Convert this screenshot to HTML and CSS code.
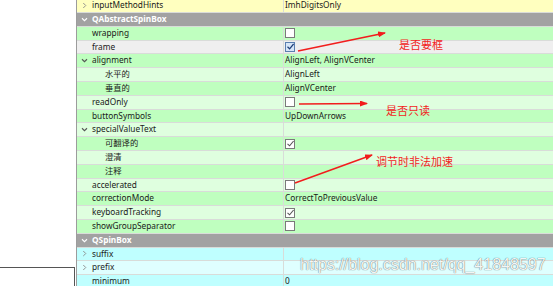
FILE: index.html
```html
<!DOCTYPE html>
<html>
<head>
<meta charset="utf-8">
<link rel="stylesheet" href="styles.css">
</head>
<body>
<div class="page">
  <div class="left">
    <div class="field"></div>
  </div>
  <div class="tree">
    <div class="row yellow"><div class="name"><span class="tw"><svg class="chev" viewBox="0 0 6 8"><path d="M1.5 1 L4.5 4 L1.5 7"/></svg></span>inputMethodHints</div><div class="val">ImhDigitsOnly</div></div>
    <div class="row head"><div class="name"><span class="tw"><svg class="chev down white" viewBox="0 0 8 6"><path d="M1 1.5 L4 4.5 L7 1.5"/></svg></span>QAbstractSpinBox</div></div>
    <div class="row g1"><div class="name">wrapping</div><div class="val"><span class="cb"></span></div></div>
    <div class="row hover"><div class="name">frame</div><div class="val"><span class="cb on blue"><svg viewBox="0 0 9 9"><path d="M1.5 4.8 L3.6 6.8 L7.6 2"/></svg></span></div></div>
    <div class="row g1"><div class="name"><span class="tw"><svg class="chev down" viewBox="0 0 8 6"><path d="M1 1.5 L4 4.5 L7 1.5"/></svg></span>alignment</div><div class="val">AlignLeft, AlignVCenter</div></div>
    <div class="row g2"><div class="name sub">水平的</div><div class="val">AlignLeft</div></div>
    <div class="row g1"><div class="name sub">垂直的</div><div class="val">AlignVCenter</div></div>
    <div class="row g2"><div class="name">readOnly</div><div class="val"><span class="cb"></span></div></div>
    <div class="row g1"><div class="name">buttonSymbols</div><div class="val">UpDownArrows</div></div>
    <div class="row g2"><div class="name"><span class="tw"><svg class="chev down" viewBox="0 0 8 6"><path d="M1 1.5 L4 4.5 L7 1.5"/></svg></span>specialValueText</div><div class="val"></div></div>
    <div class="row g1"><div class="name sub">可翻译的</div><div class="val"><span class="cb on"><svg viewBox="0 0 9 9"><path d="M1.5 4.8 L3.6 6.8 L7.6 2"/></svg></span></div></div>
    <div class="row g2"><div class="name sub">澄清</div><div class="val"></div></div>
    <div class="row g1"><div class="name sub">注释</div><div class="val"></div></div>
    <div class="row g2"><div class="name">accelerated</div><div class="val"><span class="cb"></span></div></div>
    <div class="row g1"><div class="name">correctionMode</div><div class="val">CorrectToPreviousValue</div></div>
    <div class="row g2"><div class="name">keyboardTracking</div><div class="val"><span class="cb on"><svg viewBox="0 0 9 9"><path d="M1.5 4.8 L3.6 6.8 L7.6 2"/></svg></span></div></div>
    <div class="row g1"><div class="name">showGroupSeparator</div><div class="val"><span class="cb"></span></div></div>
    <div class="row head"><div class="name"><span class="tw"><svg class="chev down white" viewBox="0 0 8 6"><path d="M1 1.5 L4 4.5 L7 1.5"/></svg></span>QSpinBox</div></div>
    <div class="row c1"><div class="name"><span class="tw"><svg class="chev" viewBox="0 0 6 8"><path d="M1.5 1 L4.5 4 L1.5 7"/></svg></span>suffix</div><div class="val"></div></div>
    <div class="row c2"><div class="name"><span class="tw"><svg class="chev" viewBox="0 0 6 8"><path d="M1.5 1 L4.5 4 L1.5 7"/></svg></span>prefix</div><div class="val"></div></div>
    <div class="row c1"><div class="name">minimum</div><div class="val">0</div></div>
  </div>

  <svg class="marks" viewBox="0 0 553 286" width="553" height="286">
    <defs>
      <marker id="ah" markerWidth="8" markerHeight="6" refX="7" refY="3" orient="auto" markerUnits="userSpaceOnUse">
        <path d="M0 0 L8 3 L0 6 Z" fill="#f21d1d"/>
      </marker>
    </defs>
    <line x1="298" y1="51" x2="385" y2="33" stroke="#f21d1d" stroke-width="1.6" marker-end="url(#ah)"/>
    <line x1="299" y1="104" x2="367" y2="103.5" stroke="#f21d1d" stroke-width="1.6" marker-end="url(#ah)"/>
    <line x1="295" y1="183" x2="372" y2="155" stroke="#f21d1d" stroke-width="1.6" marker-end="url(#ah)"/>
  </svg>
  <span class="note n1">是否要框</span>
  <span class="note n2">是否只读</span>
  <span class="note n3">调节时非法加速</span>
  <span class="wm">https://blog.csdn.net/qq_41848597</span>
</div>
</body>
</html>
```
FILE: styles.css
```css
html, body {
  margin: 0;
  padding: 0;
  background: #ffffff;
}
.page {
  position: relative;
  width: 553px;
  height: 286px;
  overflow: hidden;
  display: flex;
  font-family: "Noto Sans", "Noto Sans CJK SC", sans-serif;
  font-size: 8.3px;
  color: #1a1a1a;
}
.left {
  width: 76px;
  display: flex;
  flex-direction: column;
}
.field {
  margin-top: auto;
  height: 18px;
  width: 74px;
  border-top: 1px solid #555;
  border-right: 1px solid #555;
}
.tree {
  flex: 1;
  border-left: 1px solid #9c9c9c;
  margin-top: -0.8px;
  display: flex;
  flex-direction: column;
}
.row {
  display: flex;
  height: 12.8px;
  flex: none;
  border-bottom: 1px solid #d9dcd9;
  line-height: 12.8px;
}
.name {
  width: 191px;
  padding-left: 15px;
  border-right: 1px solid #d9dcd9;
  position: relative;
  white-space: nowrap;
}
.name.sub {
  padding-left: 28px;
  width: 178px;
}
.val {
  flex: 1;
  padding-left: 1px;
  display: flex;
  align-items: center;
  white-space: nowrap;
}
.tw {
  position: absolute;
  left: 3px;
  top: 0;
  width: 9px;
  height: 12.8px;
  display: flex;
  align-items: center;
  justify-content: center;
}
.chev {
  width: 5px;
  height: 7px;
  fill: none;
  stroke: #8a8a8a;
  stroke-width: 1.1;
}
.chev.down {
  width: 7px;
  height: 5px;
  stroke: #555;
  stroke-width: 1.3;
}
.chev.white {
  stroke: #ffffff;
}
.yellow { background: #ffffbf; }
.head {
  background: #a2a2a2;
  color: #ffffff;
  font-weight: bold;
}
.head .name { border-right: none; }
.g1 { background: #bfffbf; }
.g2 { background: #dfffdf; }
.c1 { background: #bfffff; }
.c2 { background: #dfffff; }
.hover { background: #efefef; }
.cb {
  width: 8px;
  height: 8px;
  border: 1px solid #7a7a7a;
  background: #ffffff;
  display: block;
  position: relative;
}
.cb svg {
  position: absolute;
  left: -0.5px;
  top: -0.5px;
  width: 9px;
  height: 9px;
  fill: none;
  stroke: #555;
  stroke-width: 1.1;
}
.cb.blue {
  border-color: #5a7fb0;
  background: #d6e6f8;
}
.cb.blue svg {
  stroke: #1f3f78;
  stroke-width: 1.2;
}
.marks {
  position: absolute;
  left: 0;
  top: 0;
}
.note {
  position: absolute;
  font-family: "Noto Sans CJK SC", sans-serif;
  font-size: 11px;
  line-height: 14px;
  color: #f21d1d;
  white-space: nowrap;
}
.n1 { left: 399px; top: 37px; }
.n2 { left: 386px; top: 103px; }
.n3 { left: 376px; top: 154px; }
.wm {
  position: absolute;
  left: 300px;
  top: 255px;
  font-family: "Liberation Sans", Arial, sans-serif;
  font-size: 16px;
  line-height: 20px;
  color: rgba(255, 255, 255, 0.95);
  text-shadow: 0 0 1px rgba(0, 0, 0, 0.55), 0 0 1px rgba(0, 0, 0, 0.3);
  white-space: nowrap;
}
```
